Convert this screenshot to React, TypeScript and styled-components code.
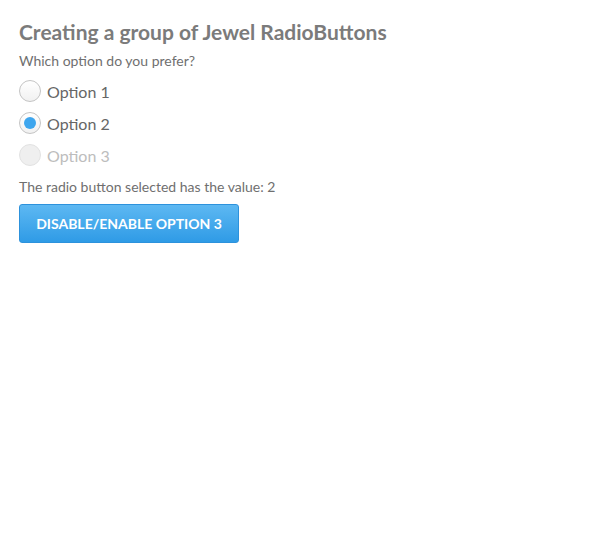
import React, { useState } from "react";
import styled, { createGlobalStyle } from "styled-components";

const Global = createGlobalStyle`
  html, body { margin: 0; padding: 0; background: #fff; }
  body { font-family: Lato, "Open Sans", sans-serif; -webkit-font-smoothing: antialiased; }
`;

const Page = styled.div`
  padding: 18px 19px;
  display: flex;
  flex-direction: column;
  align-items: flex-start;
`;

const Title = styled.h2`
  margin: 0;
  font-size: 21px;
  font-weight: 700;
  color: #7b7b7b;
  line-height: 28px;
`;

const Prompt = styled.p`
  margin: 5px 0 4px;
  font-size: 14px;
  color: #6f6f6f;
  line-height: 20px;
`;

const Group = styled.div`
  display: flex;
  flex-direction: column;
`;

const Row = styled.label<{ $disabled?: boolean }>`
  display: flex;
  align-items: center;
  gap: 6px;
  height: 32px;
  font-size: 16px;
  color: ${(p) => (p.$disabled ? "#bdbdbd" : "#666")};
  cursor: ${(p) => (p.$disabled ? "default" : "pointer")};
`;

const Circle = styled.span<{ $checked?: boolean; $disabled?: boolean }>`
  width: 22px;
  height: 22px;
  box-sizing: border-box;
  border-radius: 50%;
  border: 1px solid ${(p) => (p.$disabled ? "#e2e2e2" : "#c4c4c4")};
  background: ${(p) =>
    p.$disabled ? "#efefef" : "linear-gradient(#ffffff, #f1f1f1)"};
  display: flex;
  align-items: center;
  justify-content: center;
  &::after {
    content: "";
    display: ${(p) => (p.$checked ? "block" : "none")};
    width: 12px;
    height: 12px;
    border-radius: 50%;
    background: #3ea6ee;
  }
`;

const Result = styled.p`
  margin: 6px 0 7px;
  font-size: 14px;
  color: #6f6f6f;
  line-height: 20px;
`;

const Button = styled.button`
  font-family: Lato, "Open Sans", sans-serif;
  height: 39px;
  padding: 0 16px;
  width: 220px;
  border: 1px solid #2d92dc;
  border-radius: 3px;
  background: linear-gradient(#5db8f2, #2f9be6);
  color: #fff;
  font-size: 14px;
  font-weight: 700;
  text-transform: uppercase;
  cursor: pointer;
`;

export default function App() {
  const [value, setValue] = useState(2);
  const [dis3, setDis3] = useState(true);
  const opts = [1, 2, 3];
  return (
    <>
      <Global />
      <Page>
        <Title>Creating a group of Jewel RadioButtons</Title>
        <Prompt>Which option do you prefer?</Prompt>
        <Group>
          {opts.map((o) => {
            const disabled = o === 3 && dis3;
            return (
              <Row key={o} $disabled={disabled} onClick={() => !disabled && setValue(o)}>
                <Circle $checked={value === o} $disabled={disabled} />
                Option {o}
              </Row>
            );
          })}
        </Group>
        <Result>The radio button selected has the value: {value}</Result>
        <Button onClick={() => setDis3(!dis3)}>Disable/Enable option 3</Button>
      </Page>
    </>
  );
}
